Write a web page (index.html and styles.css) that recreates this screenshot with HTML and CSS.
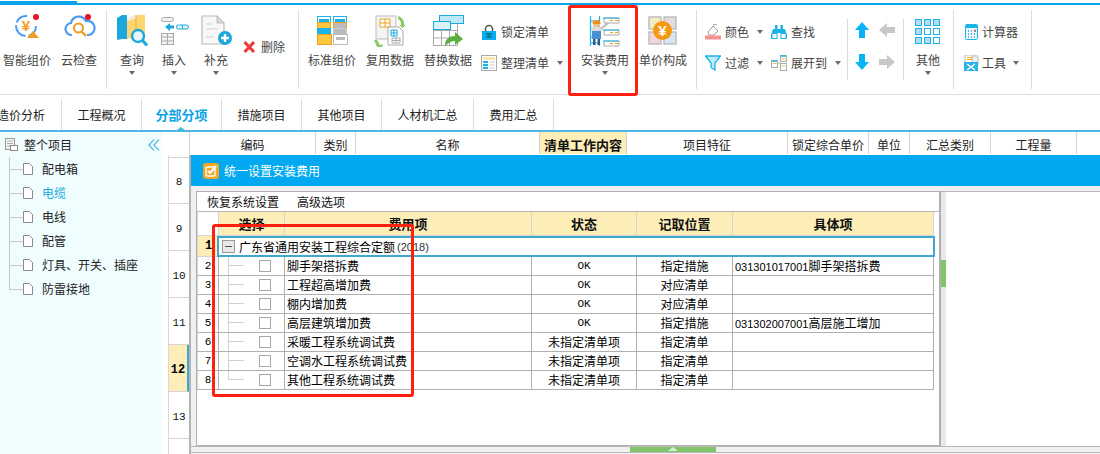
FILE: index.html
```html
<!DOCTYPE html>
<html lang="zh-CN">
<head>
<meta charset="utf-8">
<title>统一设置安装费用</title>
<link rel="stylesheet" href="styles.css">
</head>
<body>
<div class="topbar"><div class="topbar-tab"></div></div>

<div class="ribbon">
  <div class="group g1">
    <div class="big w54">
      <svg class="ic" viewBox="0 0 32 32"><circle cx="15" cy="11" r="10" fill="none" stroke="#4a9cf0" stroke-width="2" stroke-dasharray="13 3 16 3 13 20"/><text x="15" y="16" class="yen" fill="#f59a23">¥</text><circle cx="25" cy="2" r="3" fill="#e8102a"/><path d="M22 16l6 7h-12z" fill="#f59a23"/></svg>
      <span>智能组价</span>
    </div>
    <div class="big w50">
      <svg class="ic" viewBox="0 0 32 32"><path d="M9 20a6 6 0 0 1-1-12 8 8 0 0 1 15-2 7 7 0 0 1 3 14h-2" fill="none" stroke="#4a9cf0" stroke-width="2.2"/><circle cx="15.500" cy="13" r="4.500" fill="#fff" stroke="#f59a23" stroke-width="2"/><path d="M19 17l4 4" stroke="#f59a23" stroke-width="2.400"/><circle cx="25" cy="2" r="3" fill="#e8102a"/></svg>
      <span>云检查</span>
    </div>
  </div>
  <div class="sep"></div>
  <div class="group g2">
    <div class="big w42">
      <svg class="ic" viewBox="0 0 32 32"><path d="M1 3l5-3h5v24H6l-5 1z" fill="#1ca8dc"/><path d="M11 3l9-3h9v20l-18 4z" fill="#fcd670"/><path d="M11 3l9-3v3l-9 3z" fill="#f0f0f0"/><path d="M20 0v20" stroke="#e8b040"/><circle cx="22" cy="21" r="6" fill="#e8f6fb" stroke="#1ca8dc" stroke-width="2.400"/><path d="M26.500 25.500l4.500 5" stroke="#1ca8dc" stroke-width="3"/></svg>
      <span>查询</span>
      <i class="caret"></i>
    </div>
    <div class="big w42">
      <svg class="ic" viewBox="0 0 32 32"><rect x="3.500" y="2.500" width="12" height="4" rx="2" fill="#f0f0f0" stroke="#aaa"/><rect x="3.500" y="18.500" width="12" height="11" fill="#f4f4f4" stroke="#aaa"/><path d="M3.500 22h12M3.500 26h12M9.500 18.500v11" stroke="#aaa"/><path d="M7 12l5-4v2.500h4v3h-4V16z" fill="#1ca8dc"/><rect x="18.500" y="10" width="12" height="4" rx="2" fill="#e6f6fc" stroke="#1ca8dc"/><path d="M24.500 10v4" stroke="#1ca8dc"/></svg>
      <span>插入</span>
      <i class="caret"></i>
    </div>
    <div class="big w42">
      <svg class="ic" viewBox="0 0 32 32"><path d="M2 1h15l7 7v21H2z" fill="#f8f8f8" stroke="#bbb" stroke-width="1.200"/><path d="M17 1v7h7z" fill="#ddd" stroke="#bbb"/><path d="M6 9h7M6 14h12M6 22h8" stroke="#ddd" stroke-width="1.600"/><circle cx="25" cy="23" r="7" fill="#1ca8dc"/><path d="M25 19v8M21 23h8" stroke="#fff" stroke-width="2.400"/></svg>
      <span>补充</span>
      <i class="caret"></i>
    </div>
    <div class="small del">
      <svg class="ic-s del-x" viewBox="0 0 12 12"><path d="M1.500 1l9.500 10M11 1L1.500 11" stroke="#ee3c34" stroke-width="3"/></svg>
      <span>删除</span>
    </div>
  </div>
  <div class="sep"></div>
  <div class="group g3">
    <div class="big w58">
      <svg class="ic" viewBox="0 0 32 32"><rect x="1.500" y="1.500" width="13" height="27" fill="#fff" stroke="#1cb4e8"/><rect x="17.500" y="1.500" width="13" height="27" fill="#fff" stroke="#1cb4e8"/><rect x="3" y="4" width="10" height="3" fill="#1cb4e8"/><rect x="19" y="4" width="10" height="3" fill="#1cb4e8"/><rect x="1.500" y="7.500" width="13" height="6" fill="#fcc840" stroke="#f0a020"/><rect x="17.500" y="7.500" width="13" height="6" fill="#bbb" stroke="#f0a020"/><rect x="1.500" y="13.500" width="13" height="6" fill="#1cb4e8" stroke="#1cb4e8"/><rect x="17.500" y="13.500" width="13" height="6" fill="#bbb" stroke="#ccc"/><rect x="1.500" y="19.500" width="14" height="10" fill="#fcc840" stroke="#f0a020"/><rect x="17.500" y="19.500" width="14" height="10" fill="#fff" stroke="#bbb"/><rect x="20" y="22" width="9" height="3" fill="#bbb"/></svg>
      <span>标准组价</span>
    </div>
    <div class="big w58">
      <svg class="ic" viewBox="0 0 32 32"><rect x="2" y="1" width="20" height="23" fill="#f4f4f4" stroke="#bbb"/><path d="M6 4h10v8H6z" fill="#fff" stroke="#f0a020"/><path d="M6 8h10M11 4v8" stroke="#f0a020"/><path d="M14 12h11l4 4v14H14z" fill="#fff" stroke="#aaa"/><path d="M17 15h6v6h-6z" fill="#fff" stroke="#1ca8dc"/><path d="M17 18h6M20 15v6" stroke="#1ca8dc"/><path d="M18 23h8v5h-8zM18 25.500h8M22 23v5" fill="none" stroke="#aaa"/><path d="M24 1a8 8 0 0 1 6 9l2-1-3 4-4-3 2 0a6 6 0 0 0-3-6z" fill="#8cc864"/><path d="M3 25l3 5 3-1-1 3h-5l-3-7z" fill="#8cc864"/></svg>
      <span>复用数据</span>
    </div>
    <div class="big w58">
      <svg class="ic" viewBox="0 0 32 32"><rect x="1.500" y="8.500" width="24" height="22" fill="#fff" stroke="#aaa"/><path d="M1.500 15.500h24M1.500 23h24M9.500 8.500v22M17.500 8.500v22" stroke="#aaa"/><rect x="7.500" y="0.500" width="24" height="8" fill="#bfe8f6" stroke="#1ca8dc"/><rect x="1.500" y="6.500" width="17" height="8" fill="#d8f2fb" stroke="#1ca8dc"/><path d="M13 31c0-7 4-10 10-10v-4l8 7-8 6v-4c-4 0-7 2-10 5z" fill="#5ab03c"/></svg>
      <span>替换数据</span>
    </div>
    <div class="stack s-list">
      <div class="small">
        <svg class="ic-s" viewBox="0 0 16 16"><path d="M4.500 8V5a3.500 3.500 0 0 1 7 0v3" fill="none" stroke="#555" stroke-width="1.600"/><rect x="1" y="7" width="14" height="9" fill="#09aef0"/><path d="M5 10h6M5 13h6M8 10v3" stroke="#055" stroke-width="1"/></svg>
        <span>锁定清单</span>
      </div>
      <div class="small">
        <svg class="ic-s" viewBox="0 0 16 16"><rect x="0.500" y="0.500" width="15" height="15" fill="#fff" stroke="#aaa"/><rect x="2" y="2" width="12" height="3" fill="#fae8b0"/><rect x="2" y="6" width="5" height="2" fill="#1cb4e8"/><rect x="2" y="9" width="5" height="2" fill="#1cb4e8"/><rect x="2" y="12" width="5" height="2" fill="#1cb4e8"/><path d="M8.500 7h5M8.500 10h5M8.500 13h5" stroke="#ccc"/></svg>
        <span>整理清单</span>
        <i class="caret side"></i>
      </div>
    </div>
    <div class="big w58 install">
      <svg class="ic" viewBox="0 0 32 32"><path d="M1.500 1v30M10.500 1v30M1 6h10M1 14h10M1 22h10M1 28h10" stroke="#1cb4e8" stroke-width="1.200" fill="none"/><path d="M15 3h15v5H15z" fill="#fff" stroke="#aaa"/><path d="M14 3h16" stroke="#1cb4e8"/><path d="M21 5.500h3M26 5.500h3" stroke="#f0a020"/><path d="M15 15h15v5H15z" fill="#fff" stroke="#aaa"/><path d="M14 15h16" stroke="#1cb4e8"/><path d="M21 17.500h3M26 17.500h3" stroke="#f0a020"/><path d="M15 26h15v5H15z" fill="#fff" stroke="#aaa"/><path d="M14 26h16" stroke="#1cb4e8"/><path d="M21 28.500h3M26 28.500h3" stroke="#f0a020"/><rect x="3" y="15" width="9" height="9" fill="#4a90d0"/><path d="M4 24h2.500v6H4zM8.500 24H11v6H8.500z" fill="#2a5a90"/><circle cx="7.500" cy="10" r="3.500" fill="#f4c090"/><path d="M3.500 9a4 4 0 0 1 8 0z" fill="#f0901c"/><path d="M2 12h11v4H2z" fill="#ddd"/><path d="M12 14l7-6" stroke="#bbb" stroke-width="2"/></svg>
      <span>安装费用</span>
      <i class="caret"></i>
    </div>
    <div class="big w58">
      <svg class="ic" viewBox="0 0 32 32"><g stroke="#bbb" stroke-width="1.400"><rect x="2" y="2" width="12" height="12" fill="#f6eac0"/><rect x="17" y="2" width="12" height="12" fill="#e0dce0"/><rect x="2" y="17" width="12" height="12" fill="#f0d8dc"/><rect x="17" y="17" width="12" height="12" fill="#d4e8f4"/></g><circle cx="15.500" cy="15.500" r="9.500" fill="#f59a10"/><text x="15.500" y="20.500" class="yen yen-white">¥</text></svg>
      <span>单价构成</span>
    </div>
  </div>
  <div class="sep"></div>
  <div class="group g4">
    <div class="stack s-a">
      <div class="small">
        <svg class="ic-s" viewBox="0 0 16 16"><path d="M3 8l5-6 5 5-4 4H4z" fill="#fff" stroke="#999"/><path d="M8 1l4-1" stroke="#999"/><rect x="0" y="11.500" width="16" height="4" fill="#f49090"/></svg>
        <span>颜色</span>
        <i class="caret side"></i>
      </div>
      <div class="small">
        <svg class="ic-s" viewBox="0 0 16 16"><path d="M0.500 1h15L10 8v7l-4-2.500V8z" fill="#bfeafa" stroke="#1cb4e8" stroke-width="1.300"/></svg>
        <span>过滤</span>
        <i class="caret side"></i>
      </div>
    </div>
    <div class="stack s-b">
      <div class="small">
        <svg class="ic-s" viewBox="0 0 16 16"><path d="M4 1h2.500v4H9.500V1H12v4h2l2 6v4H9.500V9h-3v6H0v-4l2-6h2z" fill="#1cb4e8"/><rect x="1.500" y="10" width="4" height="4" fill="#fff"/><rect x="10.500" y="10" width="4" height="4" fill="#fff"/></svg>
        <span>查找</span>
      </div>
      <div class="small">
        <svg class="ic-s" viewBox="0 0 16 16"><rect x="0.500" y="5.500" width="6" height="7" fill="#fff" stroke="#aaa"/><rect x="9.500" y="0.500" width="6" height="6" fill="#fff" stroke="#aaa"/><rect x="9.500" y="8.500" width="6" height="7" fill="#fff" stroke="#aaa"/><path d="M1 6h5M10 1h5" stroke="#1cb4e8" stroke-width="1.500"/><path d="M1.500 8.500h4M10.500 4h4M10.500 11h4" stroke="#f0c060"/><path d="M6.500 8h3" stroke="#aaa"/></svg>
        <span>展开到</span>
        <i class="caret side"></i>
      </div>
    </div>
  </div>
  <div class="sep short"></div>
  <div class="group g5">
    <svg class="ic-s" viewBox="0 0 16 16"><path d="M8 0l7 8h-4v8H5V8H1z" fill="#09b4f4"/></svg>
    <svg class="ic-s" viewBox="0 0 16 16"><path d="M0 8l8-7v4h8v6H8v4z" fill="#c8c8c8"/></svg>
    <svg class="ic-s" viewBox="0 0 16 16"><path d="M8 16l7-8h-4V0H5v8H1z" fill="#09b4f4"/></svg>
    <svg class="ic-s" viewBox="0 0 16 16"><path d="M16 8L8 1v4H0v6h8v4z" fill="#c8c8c8"/></svg>
  </div>
  <div class="sep short"></div>
  <div class="group g6">
    <div class="big w48">
      <svg class="ic" viewBox="0 0 32 32"><g stroke="#1cb4e8" stroke-width="1" fill="#fff"><rect x="3.500" y="4.500" width="6" height="6" fill="#b4dcf0"/><rect x="12.500" y="4.500" width="6" height="6" fill="#b4dcf0"/><rect x="21.500" y="4.500" width="6" height="6" fill="#b4dcf0"/><rect x="3.500" y="13.500" width="6" height="6" fill="#b4dcf0"/><rect x="12.500" y="13.500" width="6" height="6"/><rect x="21.500" y="13.500" width="6" height="6"/><rect x="3.500" y="22.500" width="6" height="6" fill="#b4dcf0"/><rect x="12.500" y="22.500" width="6" height="6" fill="#b4dcf0"/><rect x="21.500" y="22.500" width="6" height="6"/></g></svg>
      <span>其他</span>
      <i class="caret"></i>
    </div>
  </div>
  <div class="sep"></div>
  <div class="group g7">
    <div class="stack">
      <div class="small narrow">
        <svg class="ic-s" viewBox="0 0 16 16"><rect x="2.500" y="0.500" width="12" height="15" rx="1" fill="#eef8fc" stroke="#1cb4e8"/><rect x="3" y="1" width="11" height="3" fill="#1cb4e8"/><path d="M5 7h1M8 7h1M11 7h2M5 10h1M8 10h1M11 10h1M5 13h1M8 13h1M11 13h1" stroke="#1ca0d8" stroke-width="1.400"/><path d="M11 6.500h2" stroke="#e85050" stroke-width="1.400"/></svg>
        <span>计算器</span>
      </div>
      <div class="small narrow">
        <svg class="ic-s" viewBox="0 0 16 16"><rect x="2" y="0" width="9" height="9" fill="#fff" stroke="#bbb"/><rect x="9" y="1" width="6" height="8" fill="#eee" stroke="#bbb"/><path d="M4 2.500h5M4 4.500h5" stroke="#f0b000"/><rect x="1" y="7" width="14" height="9" fill="#2cb0e8"/><path d="M4 9l8 6M12 9l-8 6" stroke="#fff" stroke-width="1.400"/></svg>
        <span>工具</span>
        <i class="caret side"></i>
      </div>
    </div>
  </div>
  <div class="sep"></div>
</div>

<nav class="tabs">
  <div class="tab tab-first"><span>造价分析</span></div>
  <div class="tab">工程概况</div>
  <div class="tab active">分部分项</div>
  <div class="tab">措施项目</div>
  <div class="tab">其他项目</div>
  <div class="tab tab-wide">人材机汇总</div>
  <div class="tab">费用汇总</div>
</nav>

<main class="main">
  <aside class="tree">
    <div class="tree-head">
      <svg class="tree-root" viewBox="0 0 13 13"><rect x="0.500" y="0.500" width="9" height="11" fill="#f6f6f0" stroke="#999"/><path d="M2 3h6M2 5.500h6M2 8h6" stroke="#aaa"/><rect x="5.500" y="7.500" width="7" height="5" fill="#fff" stroke="#888"/></svg>
      <span>整个项目</span>
      <svg class="collapse" viewBox="0 0 12 12"><path d="M6 0.500L1 6l5 5.500M11 0.500L6 6l5 5.500" fill="none" stroke="#2ca8d8" stroke-width="1.100"/></svg>
    </div>
    <div class="tree-item"><svg class="doc" viewBox="0 0 10 12"><path d="M0.500 0.500h6l3 3v8h-9z" fill="#fff" stroke="#8a8a8a"/></svg><span>配电箱</span></div>
    <div class="tree-item current"><svg class="doc" viewBox="0 0 10 12"><path d="M0.500 0.500h6l3 3v8h-9z" fill="#fff" stroke="#8a8a8a"/></svg><span>电缆</span></div>
    <div class="tree-item"><svg class="doc" viewBox="0 0 10 12"><path d="M0.500 0.500h6l3 3v8h-9z" fill="#fff" stroke="#8a8a8a"/></svg><span>电线</span></div>
    <div class="tree-item"><svg class="doc" viewBox="0 0 10 12"><path d="M0.500 0.500h6l3 3v8h-9z" fill="#fff" stroke="#8a8a8a"/></svg><span>配管</span></div>
    <div class="tree-item"><svg class="doc" viewBox="0 0 10 12"><path d="M0.500 0.500h6l3 3v8h-9z" fill="#fff" stroke="#8a8a8a"/></svg><span>灯具、开关、插座</span></div>
    <div class="tree-item last"><svg class="doc" viewBox="0 0 10 12"><path d="M0.500 0.500h6l3 3v8h-9z" fill="#fff" stroke="#8a8a8a"/></svg><span>防雷接地</span></div>
  </aside>

  <section class="sheet">
    <div class="ghead">
      <div class="gh gh-corner"></div>
      <div class="gh gh-code">编码</div>
      <div class="gh gh-type">类别</div>
      <div class="gh gh-name">名称</div>
      <div class="gh gh-work">清单工作内容</div>
      <div class="gh gh-feat">项目特征</div>
      <div class="gh gh-lock">锁定综合单价</div>
      <div class="gh gh-unit">单位</div>
      <div class="gh gh-sum">汇总类别</div>
      <div class="gh gh-qty">工程量</div>
      <div class="gh gh-end"></div>
    </div>
    <div class="sheet-body">
      <div class="rownums">
        <div class="rn">8</div>
        <div class="rn">9</div>
        <div class="rn">10</div>
        <div class="rn">11</div>
        <div class="rn rn-cur">12</div>
        <div class="rn">13</div>
      </div>
      <div class="dialog">
        <div class="dlg-title">
          <svg class="dlg-icon" viewBox="0 0 16 16"><rect width="16" height="16" rx="3" fill="#f5a623"/><rect x="3" y="4" width="9" height="9" rx="1" fill="none" stroke="#fff" stroke-width="1.400"/><path d="M5 8l2 2 6-7" fill="none" stroke="#fff" stroke-width="2"/></svg>
          <span>统一设置安装费用</span>
        </div>
        <div class="dlg-body">
          <div class="dlg-content">
            <div class="panel">
              <div class="panel-bar"><span class="pb-a">恢复系统设置</span><span class="pb-b">高级选项</span></div>
              <table class="fee">
                <colgroup><col class="c0"><col class="c1"><col class="c2"><col class="c3"><col class="c4"><col class="c5"></colgroup>
                <thead>
                  <tr><th class="corner"></th><th>选择</th><th>费用项</th><th>状态</th><th>记取位置</th><th>具体项</th></tr>
                </thead>
                <tbody>
                  <tr class="r-group">
                    <td class="n n-cur">1</td>
                    <td colspan="5"><div class="group-box"><span class="minus"></span><span>广东省通用安装工程综合定额</span><span class="year">(2018)</span></div></td>
                  </tr>
                  <tr><td class="n">2</td><td class="sel"><span class="chk"></span></td><td class="item">脚手架搭拆费</td><td class="st ok">OK</td><td class="st">指定措施</td><td class="item"><span class="code">031301017001</span>脚手架搭拆费</td></tr>
                  <tr><td class="n">3</td><td class="sel"><span class="chk"></span></td><td class="item">工程超高增加费</td><td class="st ok">OK</td><td class="st">对应清单</td><td class="item"></td></tr>
                  <tr><td class="n">4</td><td class="sel"><span class="chk"></span></td><td class="item">棚内增加费</td><td class="st ok">OK</td><td class="st">对应清单</td><td class="item"></td></tr>
                  <tr><td class="n">5</td><td class="sel"><span class="chk"></span></td><td class="item">高层建筑增加费</td><td class="st ok">OK</td><td class="st">指定措施</td><td class="item"><span class="code">031302007001</span>高层施工增加</td></tr>
                  <tr><td class="n">6</td><td class="sel"><span class="chk"></span></td><td class="item">采暖工程系统调试费</td><td class="st">未指定清单项</td><td class="st">指定清单</td><td class="item"></td></tr>
                  <tr><td class="n">7</td><td class="sel"><span class="chk"></span></td><td class="item">空调水工程系统调试费</td><td class="st">未指定清单项</td><td class="st">指定清单</td><td class="item"></td></tr>
                  <tr><td class="n">8</td><td class="sel sel-last"><span class="chk"></span></td><td class="item">其他工程系统调试费</td><td class="st">未指定清单项</td><td class="st">指定清单</td><td class="item"></td></tr>
                </tbody>
              </table>
            </div>
            <div class="vstrip"><div class="vthumb"></div></div>
            <div class="rightpane"></div>
          </div>
          <div class="splitter"><div class="split-thumb"><i class="chev"></i></div></div>
        </div>
      </div>
    </div>
  </section>
</main>

<div class="anno anno-a"></div>
<div class="anno anno-b"></div>
</body>
</html>
```

FILE: styles.css
```css
* { box-sizing: border-box; }
html, body { margin: 0; padding: 0; }
body {
  width: 1100px;
  height: 454px;
  overflow: hidden;
  background: #fff;
  font-family: "Noto Sans CJK SC", "Liberation Sans", sans-serif;
  font-size: 12px;
  line-height: 16px;
  color: #222;
  position: relative;
}

/* top stripe */
.topbar { height: 5px; border-bottom: 2px solid #0aa3e8; display: flex; align-items: flex-start; padding-top: 1px; }
.topbar-tab { width: 77px; height: 4px; background: #0aa3e8; flex: none; }

/* ribbon */
.ribbon { height: 90px; border-bottom: 1px solid #e0e0e0; display: flex; align-items: flex-start; color: #444; }
.group { display: flex; align-items: flex-start; flex: none; height: 89px; }
.sep { width: 1px; height: 79px; margin-top: 5px; background: #dcdcdc; flex: none; }
.sep.short { height: 61px; margin-top: 14px; }
.g1 { width: 106px; }
.g2 { width: 191px; padding-left: 4px; }
.g3 { width: 397px; padding-left: 4px; }
.g4 { width: 150px; padding-left: 8px; }
.g5 { width: 55px; padding: 17px 0 0 6px; display: grid; grid-template-columns: 16px 16px; column-gap: 9px; row-gap: 16px; align-content: start; }
.g6 { width: 49px; }
.g7 { width: 77px; padding-left: 9px; }

.big { display: flex; flex-direction: column; align-items: center; padding-top: 10px; flex: none; }
.big span { margin-top: 5px; white-space: nowrap; }
.w54 { width: 54px; } .w50 { width: 50px; } .w42 { width: 42px; } .w58 { width: 58px; } .w48 { width: 48px; }
.ic { width: 32px; height: 32px; overflow: visible; display: block; flex: none; }
.install { margin-left: 4px; }
.caret { display: block; width: 0; height: 0; margin-top: 3px; border-left: 3.500px solid transparent; border-right: 3.500px solid transparent; border-top: 4px solid #6a6a72; }
.caret.side { margin: 0 0 0 4px; }

.stack { display: flex; flex-direction: column; row-gap: 7px; padding-top: 15px; flex: none; }
.s-list { width: 91px; margin-left: 4px; }
.s-a { width: 66px; }
.small { height: 24px; display: flex; align-items: center; column-gap: 4px; white-space: nowrap; }
.small.narrow { column-gap: 3px; }
.ic-s { width: 16px; height: 16px; display: block; flex: none; }
.del { margin: 30px 0 0 6px; column-gap: 6px; }
.del-x { width: 12px; height: 12px; }

.yen { font-family: "Liberation Sans", sans-serif; font-size: 15px; font-weight: 700; text-anchor: middle; }
.yen-white { fill: #fff; }

/* tabs */
.tabs { height: 37px; display: flex; padding-top: 4px; border-bottom: 2px solid #4db8e8; color: #222; position: relative; }
.tab { width: 80px; height: 31px; border-right: 1px solid #dcdcdc; display: flex; align-items: center; justify-content: center; padding-top: 1px; padding-bottom: 1px; flex: none; white-space: nowrap; }
.tab-first { width: 62px; justify-content: flex-end; padding-right: 16px; overflow: hidden; }
.tab-first span { flex: none; }
.tab-wide { width: 92px; }
.tab.active { color: #0aa3e8; font-weight: 700; font-size: 13px; position: relative; }
.tab.active::after { content: ""; position: absolute; left: 35px; bottom: 0; border-left: 4px solid transparent; border-right: 4px solid transparent; border-bottom: 3px solid #4db8e8; }

/* main */
.main { display: flex; height: 322px; }
.tree { width: 162px; flex: none; background: #f0fdff; margin-right: 6px; position: relative; color: #222; }
.tree::after { content: ""; position: absolute; right: 0; top: 8px; border-top: 5px solid transparent; border-bottom: 5px solid transparent; border-right: 4px solid #fff; }
.tree-head { height: 25px; display: flex; align-items: center; padding: 0 2px 0 5px; column-gap: 6px; }
.tree-root { width: 13px; height: 13px; flex: none; }
.collapse { width: 12px; height: 12px; margin-left: auto; flex: none; }
.tree-item {
  height: 24px;
  display: flex;
  align-items: center;
  padding-left: 23px;
  column-gap: 9px;
  background:
    linear-gradient(#c8c8c8, #c8c8c8) 9px 12px / 14px 1px no-repeat,
    linear-gradient(#c8c8c8, #c8c8c8) 9px 0 / 1px 100% no-repeat;
}
.tree-item.last {
  background:
    linear-gradient(#c8c8c8, #c8c8c8) 9px 12px / 14px 1px no-repeat,
    linear-gradient(#c8c8c8, #c8c8c8) 9px 0 / 1px 12px no-repeat;
}
.tree-item.current { color: #1ca8dc; }
.doc { width: 10px; height: 12px; flex: none; }

/* sheet */
.sheet { flex: 1; min-width: 0; display: flex; flex-direction: column; }
.ghead { height: 23px; display: flex; flex: none; color: #222; }
.gh { height: 22px; border-right: 1px solid #d4d4d4; display: flex; align-items: center; justify-content: center; flex: none; padding-top: 4px; white-space: nowrap; }
.gh-corner { width: 22px; border-right-color: #d4d4d4; }
.gh-code { width: 126px; }
.gh-type { width: 40px; }
.gh-name { width: 184px; }
.gh-work { width: 87px; background: #fdeeb8; font-weight: 700; font-size: 13px; color: #111; }
.gh-feat { width: 161px; }
.gh-lock { width: 81px; }
.gh-unit { width: 41px; }
.gh-sum { width: 81px; }
.gh-qty { width: 86px; }
.gh-end { width: 23px; border-right: 0; }
.sheet-body { display: flex; flex: 1; min-height: 0; }
.rownums { width: 21px; flex: none; padding-top: 2px; border-left: 1px solid #d8d8d8; }
.rn { height: 47px; border-bottom: 1px solid #d4d4d4; display: flex; align-items: center; justify-content: center; padding-top: 3px; font-family: "Liberation Mono", monospace; font-size: 11px; color: #111; }
.rn:first-child { border-top: 1px solid #d4d4d4; }
.rn-cur { background: #fdeeb8; border-right: 2px solid #3ea8d0; font-weight: 700; font-size: 12px; color: #000; }

/* dialog */
.dialog { flex: 1; min-width: 0; border-left: 2px solid #b4b4b4; display: flex; flex-direction: column; }
.dlg-title { height: 31px; flex: none; background: #03a9f0; color: #fff; display: flex; align-items: center; padding-left: 12px; column-gap: 5px; }
.dlg-icon { width: 16px; height: 16px; flex: none; }
.dlg-body { flex: 1; background: #f0f0f0; padding-top: 5px; display: flex; flex-direction: column; min-height: 0; }
.dlg-content { height: 255px; flex: none; display: flex; margin-left: 5px; }
.panel { width: 745px; flex: none; background: #fff; border: 1px solid #b0b0b0; border-right-width: 2px; }
.panel-bar { height: 20px; border-bottom: 1px solid #b8b8b8; display: flex; align-items: center; padding-left: 10px; color: #111; background: #fff; }
.pb-b { margin-left: 18px; }
.vstrip { width: 5px; flex: none; background: #e6e8ee; padding-top: 68px; border-top: 1px solid #b8b8b8; }
.vthumb { height: 27px; background: #82c46c; }
.rightpane { flex: 1; background: #fff; border-top: 1px solid #b8b8b8; }
.splitter { height: 7px; flex: none; border-top: 1px solid #b8b8b8; border-bottom: 1px solid #b8b8b8; padding-left: 439px; background: #f0f0f0; }
.split-thumb { width: 86px; height: 5px; background: #82c46c; display: flex; justify-content: center; align-items: flex-start; }
.chev { width: 0; height: 0; margin-top: 0; border-left: 5px solid transparent; border-right: 5px solid transparent; border-bottom: 4px solid #d8f0d0; }

/* table */
.fee { border-collapse: separate; border-spacing: 0; table-layout: fixed; width: 737px; color: #000; }
.c0 { width: 22px; } .c1 { width: 66px; } .c2 { width: 247px; } .c3 { width: 105px; } .c4 { width: 96px; } .c5 { width: 201px; }
.fee th { height: 24px; padding: 0; background: #fdeeb8; border-right: 1px solid #d4d4d4; border-bottom: 1px solid #d4d4d4; font-size: 13px; font-weight: 700; line-height: 16px; color: #111; }
.fee th.corner { background: #fff; border-left: 1px solid #d4d4d4; }
.fee td { height: 19px; padding: 0; border-right: 1px solid #b0b0b0; border-bottom: 1px solid #b0b0b0; line-height: 14px; white-space: nowrap; overflow: hidden; }
.fee td.n { border-left: 1px solid #d4d4d4; text-align: center; font-family: "Liberation Mono", monospace; font-size: 11px; }
.fee td.n-cur { background: #fdeeb8; font-weight: 700; font-size: 12px; }
.r-group td { height: 21px; border-bottom: 0; border-right: 0; overflow: visible; }
.group-box { height: 21px; margin-left: -2px; margin-right: -1px; border: 2px solid #3ea8d0; display: flex; align-items: center; padding-left: 3px; }
.r-group td.n { border-right: 0; border-bottom: 1px solid #d4d4d4; }
.minus { width: 13px; height: 13px; border: 1px solid #999; background: linear-gradient(#555, #555) center / 7px 1px no-repeat, #e8e8e8; margin-right: 4px; flex: none; }
.year { font-family: "Liberation Sans", sans-serif; font-size: 11px; margin-left: 2px; color: #333; }
.sel {
  padding-left: 40px !important;
  background:
    linear-gradient(#d0d0d0, #d0d0d0) 9px 8px / 16px 1px no-repeat,
    linear-gradient(#d0d0d0, #d0d0d0) 9px 0 / 1px 100% no-repeat;
}
.sel-last {
  background:
    linear-gradient(#d0d0d0, #d0d0d0) 9px 8px / 16px 1px no-repeat,
    linear-gradient(#d0d0d0, #d0d0d0) 9px 0 / 1px 9px no-repeat;
}
.chk { display: block; width: 12px; height: 12px; border: 1px solid #a8a8a8; background: #fff; }
.item { padding-left: 2px !important; }
.st { text-align: center; }
.ok { font-family: "Liberation Mono", monospace; font-size: 11px; }
.code { font-family: "Liberation Sans", sans-serif; font-size: 11px; }

/* red annotations */
.anno { position: absolute; border: 3px solid #ff2010; border-radius: 3px; pointer-events: none; }
.anno-a { left: 568px; top: 5px; width: 70px; height: 91px; }
.anno-b { left: 212px; top: 224px; width: 202px; height: 173px; }
```
